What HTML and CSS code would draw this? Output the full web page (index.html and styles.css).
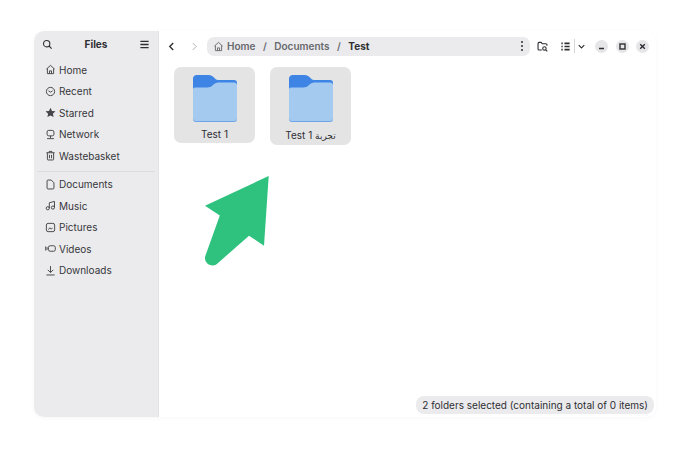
FILE: index.html
```html
<!DOCTYPE html>
<html lang="en">
<head>
    <meta charset="UTF-8">
    <meta name="viewport" content="width=device-width, initial-scale=1.0">
    <title>Files</title>
    <link rel="stylesheet" href="styles.css">
</head>
<body>
    <div class="window">
        <aside class="sidebar">
            <div class="side-header">
                <svg class="icon dark" viewBox="0 0 16 16"><circle cx="6.8" cy="6.8" r="4.6"/><path d="M10.2 10.2 14 14"/></svg>
                <span class="side-title">Files</span>
                <svg class="icon dark" viewBox="0 0 16 16"><path d="M2 3.5h12M2 8h12M2 12.5h12" stroke-width="2"/></svg>
            </div>
            <nav class="places">
                <div class="place"><svg class="icon" viewBox="0 0 16 16"><path d="M2 7.5 8 2l6 5.5M3.5 6.5V14h9V6.5M6.5 14v-4h3v4"/></svg>Home</div>
                <div class="place"><svg class="icon" viewBox="0 0 16 16"><circle cx="8" cy="8" r="6"/><path d="M5 7l3 2 3-2"/></svg>Recent</div>
                <div class="place"><svg class="icon" viewBox="0 0 16 16"><path class="solid" d="M8 1l2.2 4.7 5 .6-3.7 3.4 1 5L8 12.2l-4.5 2.5 1-5L.8 6.3l5-.6z"/></svg>Starred</div>
                <div class="place"><svg class="icon" viewBox="0 0 16 16"><rect x="3" y="2" width="10" height="8" rx="2.5"/><path d="M8 10v3M3 14h10"/></svg>Network</div>
                <div class="place"><svg class="icon" viewBox="0 0 16 16"><path d="M2 4h12M6 4V2h4v2M3.5 4v9.5q0 1 1 1h7q1 0 1-1V4M6.5 7v5M9.5 7v5"/></svg>Wastebasket</div>
            </nav>
            <div class="side-sep"></div>
            <nav class="places">
                <div class="place"><svg class="icon" viewBox="0 0 16 16"><path d="M3 3q0-1.5 1.5-1.5H9L13 5.5V13q0 1.5-1.5 1.5h-7Q3 14.5 3 13z"/></svg>Documents</div>
                <div class="place"><svg class="icon" viewBox="0 0 16 16"><circle cx="4" cy="12" r="2.3"/><circle cx="11.5" cy="11" r="2.3"/><path d="M6.3 12V4l7.5-2v9"/></svg>Music</div>
                <div class="place"><svg class="icon" viewBox="0 0 16 16"><rect x="2" y="2" width="12" height="12" rx="2.5"/><path d="M5 11l2-2.5L9 10l2-1"/></svg>Pictures</div>
                <div class="place"><svg class="icon" viewBox="0 0 16 16"><rect x="5" y="4" width="10" height="8" rx="2.5"/><path d="M1 5v6M3 6v4"/></svg>Videos</div>
                <div class="place"><svg class="icon" viewBox="0 0 16 16"><path d="M8 1.5v9M4 7l4 4 4-4M2 14.5h12"/></svg>Downloads</div>
            </nav>
        </aside>
        <main class="content">
            <header class="toolbar">
                <svg class="icon dark nav-btn" viewBox="0 0 16 16"><path d="M10.5 3 5.500 8l5 5" stroke-width="2"/></svg>
                <svg class="icon faint nav-btn" viewBox="0 0 16 16"><path d="M5.5 3l5 5-5 5"/></svg>
                <div class="pathbar">
                    <svg class="icon muted" viewBox="0 0 16 16"><path d="M2 7.5 8 2l6 5.5M3.5 6.5V14h9V6.5M6.5 14v-4h3v4"/></svg>
                    <span class="crumb crumb-home">Home</span>
                    <span class="crumb slash">/</span>
                    <span class="crumb">Documents</span>
                    <span class="crumb slash">/</span>
                    <span class="crumb current">Test</span>
                    <span class="dots"><i></i><i></i><i></i></span>
                </div>
                <svg class="icon dark tool-find" viewBox="0 0 16 16"><path d="M7 13H3q-1.5 0-1.5-1.5v-8Q1.5 2 3 2h3l1.5 2H13q1.5 0 1.5 1.5V7"/><circle cx="10.8" cy="10.8" r="2.5"/><path d="M12.8 12.8 15 15"/></svg>
                <svg class="icon dark tool-view" viewBox="0 0 16 16"><path d="M2 3.5h2M2 8h2M2 12.5h2M6.5 3.5H14M6.5 8H14M6.5 12.5H14" stroke-width="2.3"/></svg>
                <span class="tool-divider"></span>
                <svg class="icon dark tool-more" viewBox="0 0 16 16"><path d="M3 5.5l5 5 5-5" stroke-width="2"/></svg>
                <div class="win-buttons">
                    <span class="win-btn"><svg viewBox="0 0 13 13"><path d="M4 8.5h5"/></svg></span>
                    <span class="win-btn"><svg viewBox="0 0 13 13"><rect x="4" y="4" width="5" height="5"/></svg></span>
                    <span class="win-btn"><svg viewBox="0 0 13 13"><path d="M4.2 4.2l4.6 4.6M8.8 4.2 4.2 8.8"/></svg></span>
                </div>
            </header>
            <section class="grid">
                <div class="tile">
                    <svg class="folder" viewBox="0 0 46 48">
                        <path class="folder-back" d="M1 4q0-4 4-4h12q3 0 5 2.5T26 5h16q3 0 3 3v12H1z"/>
                        <path class="folder-edge" d="M1 30h44v14q0 3-3 3H4q-3 0-3-3z"/>
                        <path class="folder-front" d="M1 14.5q0-2 2-2h12q4 0 6-2.5t5-2.500h16q3 0 3 3V43q0 3-3 3H4q-3 0-3-3z"/>
                    </svg>
                    <span class="tile-name">Test 1</span>
                </div>
                <div class="tile tile-tall">
                    <svg class="folder" viewBox="0 0 46 48">
                        <path class="folder-back" d="M1 4q0-4 4-4h12q3 0 5 2.5T26 5h16q3 0 3 3v12H1z"/>
                        <path class="folder-edge" d="M1 30h44v14q0 3-3 3H4q-3 0-3-3z"/>
                        <path class="folder-front" d="M1 14.5q0-2 2-2h12q4 0 6-2.5t5-2.500h16q3 0 3 3V43q0 3-3 3H4q-3 0-3-3z"/>
                    </svg>
                    <span class="tile-name">Test 1 <span class="arabic" lang="ar">تجربة</span></span>
                </div>
            </section>
        </main>
        <svg class="arrow" viewBox="0 0 70 95"><path d="M64.7 1 1 30.7l14.8 9.800L1.300 81q-1.500 5 2.500 8 4 2.500 8.500 0.500L45 60.700l15 10z"/></svg>
        <div class="status">2 folders selected (containing a total of 0 items)</div>
    </div>
</body>
</html>
```

FILE: styles.css
```css
* {
    box-sizing: border-box;
}
body {
    margin: 0;
    width: 690px;
    height: 454px;
    overflow: hidden;
    background-color: #ffffff;
    font-family: "Inter", "DejaVu Sans", sans-serif;
    font-size: 10px;
    color: #2e2e33;
    padding: 31px 0 0 34px;
}
.window {
    position: relative;
    width: 622px;
    height: 386px;
    display: flex;
    background: #ffffff;
    border-radius: 10px;
    box-shadow: 0 1px 5px rgba(0,0,0,0.035);
    overflow: hidden;
}
.sidebar {
    flex: 0 0 125px;
    background-color: #ebebed;
    border-right: 1px solid #e2e2e4;
}
.side-header {
    height: 26px;
    padding: 0 8px;
    display: flex;
    align-items: center;
    justify-content: space-between;
}
.side-title {
    font-weight: 700;
}
.icon {
    flex: none;
    width: 11px;
    height: 11px;
    fill: none;
    stroke: #46464b;
    stroke-width: 1.4;
}
.icon.dark {
    stroke: #2e2e33;
    stroke-width: 1.6;
}
.icon.muted {
    stroke: #6b6b70;
}
.icon.faint {
    stroke: #b0b0b4;
}
.solid {
    fill: #46464b;
    stroke: none;
}
.places {
    padding-top: 2px;
    display: flex;
    flex-direction: column;
}
.place {
    height: 21.5px;
    padding-left: 11px;
    display: flex;
    align-items: center;
    gap: 3px;
    color: #36363b;
}
.side-sep {
    height: 1px;
    margin: 4px 3px 0;
    background-color: #dcdcde;
}
.content {
    flex: 1;
    min-width: 0;
}
.toolbar {
    height: 26px;
    padding: 4px 0 0 7px;
    display: flex;
    align-items: center;
}
.nav-btn {
    margin-right: 12px;
}
.pathbar {
    width: 323px;
    height: 19px;
    margin-left: -5px;
    padding: 0 6px;
    display: flex;
    align-items: center;
    gap: 7.5px;
    border-radius: 7px;
    background-color: #ebebed;
    font-weight: 600;
}
.pathbar .icon {
    margin-right: -4.5px;
}
.crumb {
    color: #68686d;
}
.crumb.current {
    color: #2e2e33;
    font-weight: 700;
}
.dots {
    margin-left: auto;
    margin-right: 1px;
    display: flex;
    flex-direction: column;
    gap: 1.5px;
}
.dots i {
    width: 2.5px;
    height: 2.5px;
    border-radius: 50%;
    background-color: #2e2e33;
}
.tool-find {
    margin-left: 7px;
}
.tool-view {
    margin-left: 12px;
}
.tool-divider {
    width: 1px;
    height: 14px;
    margin-left: 3px;
    background-color: #d6d6d8;
}
.tool-more {
    margin-left: 2px;
    width: 9px;
    height: 9px;
}
.win-buttons {
    margin-left: 9px;
    display: flex;
    gap: 7.5px;
}
.win-btn {
    width: 13px;
    height: 13px;
    border-radius: 50%;
    background-color: #e6e6e8;
}
.win-btn svg {
    display: block;
    fill: none;
    stroke: #2e2e33;
    stroke-width: 1.4;
}
.grid {
    padding: 10px 0 0 15px;
    display: flex;
    align-items: flex-start;
    gap: 15px;
}
.tile {
    width: 81px;
    height: 76px;
    padding-top: 8px;
    display: flex;
    flex-direction: column;
    align-items: center;
    border-radius: 7px;
    background-color: #e4e4e5;
}
.tile-tall {
    height: 78px;
}
.tile-tall .tile-name {
    margin-top: 6px;
}
.arabic {
    font-size: 9px;
}
.folder {
    width: 46px;
    height: 48px;
}
.folder-back {
    fill: #3d84e4;
}
.folder-front {
    fill: #a4caf0;
}
.folder-edge {
    fill: #6ea4e8;
}
.tile-name {
    margin-top: 5px;
    color: #2e2e33;
}
.arrow {
    position: absolute;
    left: 170px;
    top: 144px;
    width: 70px;
    height: 95px;
    fill: #2ec27e;
}
.status {
    position: absolute;
    right: 2px;
    bottom: 3px;
    height: 18px;
    padding: 0 6px;
    display: flex;
    align-items: center;
    border-radius: 8px;
    background-color: #ebebed;
    white-space: nowrap;
}
```
